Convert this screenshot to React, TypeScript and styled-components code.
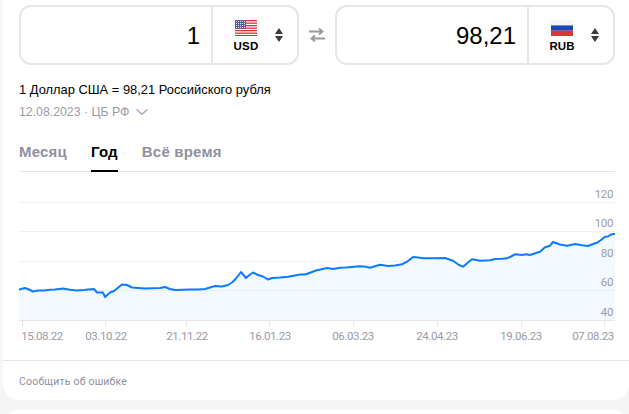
import React from 'react';
import styled, { createGlobalStyle } from 'styled-components';

const GlobalStyle = createGlobalStyle`
    html, body {
        margin: 0;
        padding: 0;
        background: #f5f5f6;
        font-family: 'Liberation Sans', Arial, sans-serif;
    }
`;

const Page = styled.div`
    height: 414px;
    padding-left: 3px;
    overflow: hidden;
    display: flex;
    flex-direction: column;
    gap: 10px;
`;

const Card = styled.div`
    flex: none;
    height: 400px;
    background: #fff;
    border-radius: 0 0 16px 16px;
    display: flex;
    flex-direction: column;
`;

const NextCard = styled.div`
    flex: none;
    height: 40px;
    background: #fff;
    border-radius: 16px 16px 0 0;
`;

const Body = styled.div`
    flex: 1;
    padding: 5px 14px 0 16px;
`;

const Converter = styled.div`
    display: flex;
    align-items: center;
    justify-content: space-between;
`;

const CurrencyBox = styled.div`
    box-sizing: border-box;
    width: 280px;
    height: 60px;
    border: 2px solid #e5e5ec;
    border-radius: 12px;
    display: flex;
`;

const Amount = styled.div`
    flex: 1;
    padding-right: 11px;
    font-size: 24px;
    line-height: 58px;
    text-align: right;
    color: #000;
`;

const Picker = styled.div`
    box-sizing: border-box;
    width: 86px;
    flex: none;
    border-left: 2px solid #e5e5ec;
    padding: 0 14px 0 18px;
    display: flex;
    align-items: center;
    justify-content: space-between;
`;

const PickerLabel = styled.div`
    width: 30px;
    display: flex;
    flex-direction: column;
    align-items: center;
    gap: 3px;
    margin-top: 2px;
`;

const Code = styled.span<{ $spaced?: boolean }>`
    font-size: 11.5px;
    line-height: 14px;
    font-weight: 700;
    color: #000;
    letter-spacing: ${p => (p.$spaced ? '0.3px' : '0')};
`;

const Rate = styled.div`
    margin-top: 16px;
    font-size: 12.9px;
    line-height: 17px;
    color: #000;
`;

const Source = styled.div`
    margin-top: 6px;
    font-size: 12.3px;
    line-height: 16px;
    color: #9a9aa8;
    display: flex;
    align-items: center;
    gap: 7px;
`;

const Tabs = styled.div`
    margin-top: 15px;
    height: 37px;
    display: flex;
    gap: 24px;
    box-sizing: border-box;
    border-bottom: 1px solid #e5e5e8;
`;

const Tab = styled.div<{ $active?: boolean }>`
    height: 37px;
    box-sizing: border-box;
    font-size: 15px;
    line-height: 34px;
    font-weight: 700;
    letter-spacing: 0.2px;
    color: ${p => (p.$active ? '#000' : '#9090a0')};
    border-bottom: ${p => (p.$active ? '2px solid #000' : 'none')};
`;

const ChartSvg = styled.svg`
    display: block;
    width: 596px;
    height: 188px;
`;

const AxisText = styled.text`
    font-family: 'Roboto', sans-serif;
    font-size: 11.5px;
    letter-spacing: -0.4px;
    fill: #9a9aa8;
`;

const Footer = styled.div`
    box-sizing: border-box;
    height: 40px;
    border-top: 1px solid #e5e5e8;
    padding: 14px 16px 0;
    font-family: 'Roboto', sans-serif;
    font-size: 10.5px;
    line-height: 14px;
    letter-spacing: 0.2px;
    color: #9090a0;
`;

// chart coordinates are relative to the page, shifted by the viewBox below
const points: [number, number][] = [
    [19, 289.5], [25, 288], [29, 289.5], [33, 291.5], [38, 290.5], [44, 290.5], [50, 289.8], [55, 289.5], [63, 288.5],
    [70, 289.8], [77, 290.5], [84, 290], [88, 289.5], [94, 289], [97, 292.5], [103, 292.5], [105, 297], [110, 292.5],
    [114, 291], [117, 288.5], [122, 284.5], [127, 285], [132, 287.5], [138, 288], [145, 288.5], [152, 288.2],
    [160, 288], [165, 287], [170, 289], [175, 290], [183, 289.7], [190, 289.5], [198, 289.5], [205, 289], [210, 287.5],
    [215, 286], [222, 286.5], [228, 285], [232, 282.5], [236, 278.5], [241, 272], [246, 278], [250, 274.5], [253, 272.5],
    [258, 275], [263, 276.5], [268, 279.5], [272, 278], [280, 277.5], [288, 276.8], [295, 275.5], [300, 274.5],
    [305, 274.5], [310, 272.7], [316, 270.5], [327, 268], [333, 269], [340, 267.7], [346, 267.5], [360, 266.3],
    [366, 266.8], [370, 267.7], [380, 264.7], [388, 266], [395, 265.5], [402, 264.3], [407, 261.7], [413, 257],
    [418, 257.6], [423, 258.3], [435, 258.3], [445, 258], [453, 260.7], [459, 265], [463, 266.7], [468, 262.5],
    [472, 259.3], [480, 260.7], [490, 260.3], [495, 259], [502, 258.8], [507, 258.3], [511, 256.5], [515, 254.3],
    [522, 255], [526, 254.2], [530, 255], [536, 253], [540, 251.7], [545, 247.3], [550, 245.7], [553, 242],
    [560, 244.5], [567, 245.7], [575, 244], [582, 245.3], [588, 246], [593, 244], [597, 242.7], [601, 240],
    [605, 236.7], [608, 236.5], [611, 234.5], [615, 233.7],
];
const linePath = points.map(([x, y], i) => `${i ? 'L' : 'M'}${x} ${y}`).join(' ');
const areaPath = `${linePath} L615 320 L19 320 Z`;

const grid = [202.5, 231.5, 261.5, 290.5];
const yLabels = [
    { y: 198, text: '120' },
    { y: 227, text: '100' },
    { y: 257, text: '80' },
    { y: 286, text: '60' },
    { y: 316, text: '40' },
];
const xLabels = [
    { tick: 22.5, x: 42, text: '15.08.22' },
    { tick: 105.5, x: 106, text: '03.10.22' },
    { tick: 186.5, x: 187, text: '21.11.22' },
    { tick: 269.5, x: 270, text: '16.01.23' },
    { tick: 353.5, x: 353, text: '06.03.23' },
    { tick: 437.5, x: 437, text: '24.04.23' },
    { tick: 521.5, x: 521, text: '19.06.23' },
    { tick: 604.5, x: 593, text: '07.08.23' },
];

const UsFlag = () => (
    <svg width="22" height="16" viewBox="0 0 22 16">
        <rect width="22" height="16" fill="#fff" />
        {[0, 2.5, 5, 7.5, 10, 12.5, 15].map(y => (
            <rect key={y} y={y} width="22" height="1.3" fill="#d8323c" />
        ))}
        <rect width="11" height="8.8" fill="#5a5a9a" />
        {[1.5, 3.5, 5.5, 7.5].map(y =>
            [1.5, 3.5, 5.5, 7.5, 9.5].map(x => <rect key={`${x}-${y}`} x={x - 0.5} y={y - 0.5} width="1" height="1" fill="#e4e4f0" />),
        )}
    </svg>
);

const RuFlag = () => (
    <svg width="22" height="16" viewBox="0 0 22 16">
        <rect width="22" height="5.4" fill="#f6f6f6" />
        <rect y="5.4" width="22" height="5.3" fill="#1a47b8" />
        <rect y="10.7" width="22" height="5.3" fill="#dc3535" />
    </svg>
);

const SortArrows = () => (
    <svg width="8" height="14" viewBox="0 0 8 14">
        <path d="M4 0 L8 6 H0 Z" fill="#3a3a3a" />
        <path d="M0 8 H8 L4 14 Z" fill="#3a3a3a" />
    </svg>
);

const SwapIcon = () => (
    <svg width="16" height="14" viewBox="0 0 16 14">
        <path d="M0 3.5 H13 M10 0.5 L13.5 3.5 L10 6.5" fill="none" stroke="#999" strokeWidth="1.8" />
        <path d="M16 10.5 H3 M6 7.5 L2.5 10.5 L6 13.5" fill="none" stroke="#999" strokeWidth="1.8" />
    </svg>
);

const Chevron = () => (
    <svg width="12" height="6" viewBox="0 0 12 6">
        <path d="M0.5 0.5 L6 5.2 L11.5 0.5" fill="none" stroke="#9a9aa8" strokeWidth="1.1" />
    </svg>
);

const Currency: React.FC<{ amount: string; code: string; flag: React.ReactNode; spaced?: boolean }> = ({ amount, code, flag, spaced }) => (
    <CurrencyBox>
        <Amount>{amount}</Amount>
        <Picker>
            <PickerLabel>
                {flag}
                <Code $spaced={spaced}>{code}</Code>
            </PickerLabel>
            <SortArrows />
        </Picker>
    </CurrencyBox>
);

const App: React.FC = () => {
    return (
        <Page>
            <GlobalStyle />
            <Card>
                <Body>
                    <Converter>
                        <Currency amount="1" code="USD" flag={<UsFlag />} spaced />
                        <SwapIcon />
                        <Currency amount="98,21" code="RUB" flag={<RuFlag />} />
                    </Converter>
                    <Rate>1 Доллар США = 98,21 Российского рубля</Rate>
                    <Source>
                        12.08.2023 · ЦБ РФ
                        <Chevron />
                    </Source>
                    <Tabs>
                        <Tab>Месяц</Tab>
                        <Tab $active>Год</Tab>
                        <Tab>Всё время</Tab>
                    </Tabs>
                    <ChartSvg viewBox="19 172 596 188">
                        {grid.map(y => (
                            <line key={y} x1="19" x2="615" y1={y} y2={y} stroke="#f0f0f2" />
                        ))}
                        <path d={areaPath} fill="#f4f9ff" />
                        <line x1="19" x2="615" y1="290.5" y2="290.5" stroke="#e6edfa" />
                        <line x1="19" x2="615" y1="320.5" y2="320.5" stroke="#e5e5e8" />
                        <path d={linePath} fill="none" stroke="#0a7bff" strokeWidth="2" strokeLinejoin="round" />
                        {yLabels.map(l => (
                            <AxisText key={l.text} x="613" y={l.y} textAnchor="end">{l.text}</AxisText>
                        ))}
                        {xLabels.map(l => (
                            <React.Fragment key={l.text}>
                                <line x1={l.tick} x2={l.tick} y1="321" y2="326" stroke="#e5e5e8" />
                                <AxisText x={l.x} y="340" textAnchor="middle">{l.text}</AxisText>
                            </React.Fragment>
                        ))}
                    </ChartSvg>
                </Body>
                <Footer>Сообщить об ошибке</Footer>
            </Card>
            <NextCard />
        </Page>
    );
};

export default App;
